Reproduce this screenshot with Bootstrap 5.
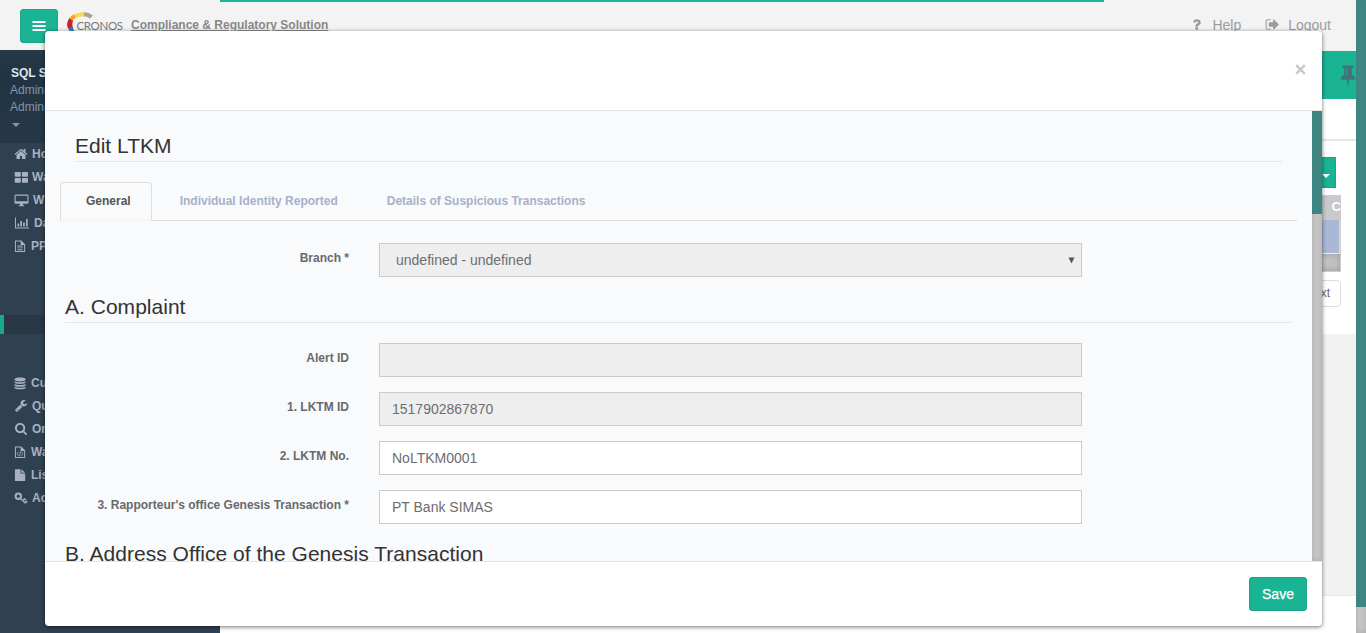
<!DOCTYPE html>
<html lang="en">
<head>
<meta charset="utf-8">
<meta name="viewport" content="width=device-width, initial-scale=1">
<title>Edit LTKM</title>
<link rel="stylesheet" href="https://cdn.jsdelivr.net/npm/bootstrap@5.3.0/dist/css/bootstrap.min.css">
<style>
body{font-family:"Liberation Sans",Arial,sans-serif;font-size:13px;line-height:1.42857;color:#676a6c;background:#fff;height:633px;overflow:hidden}
svg{display:block;fill:currentColor;flex:none}
.topbar{height:50px;background:#f3f3f3;color:#999c9e}
.teal-btn{background:#1ab394;border:1px solid #18a689;color:#fff;border-radius:3px}
.menu-toggle{width:38px;height:34px;margin:9px 0 0 20px}
.brand-logo{margin:9px 0 0 8px}
.brand-title{margin:17px 0 0 8px;font-size:12px;line-height:17px;color:#888}
.top-links{margin-top:15px;font-size:14px;line-height:20px;padding-right:25px}
.top-links svg{margin-top:2px}
.side{width:220px;background:#2f4050;color:#a7b1c2;font-weight:700;font-size:12px}
.profile{height:93px;padding:15px 10px 0;background:linear-gradient(#283a49,#223442 30%,#263847);color:#8095a8;font-weight:400}
.profile strong{color:#dfe4ed;line-height:17px;font-size:12px;padding-left:1px}
.profile span{line-height:17px}
.caret{border:4px solid transparent;border-top-color:currentColor;border-bottom:0;width:0;height:0;margin:7px 0 0 2px}
.side-link{height:23px;padding-left:14px;gap:4px}
.side-link svg{margin-top:-2px}
.side-active{height:19px;margin:57px 0 38px;background:#293846;border-left:4px solid #19aa8d}
.page-area{min-width:0;background:#f2f2f2}
.band{height:48px;margin-top:1px;background:#1ab394;color:#42757a}
.panel-head{height:42px;background:#fff;border-bottom:2px solid #e7e7e7}
.panel-main{height:193px;background:#fff;padding:16px 15px 0 0}
.drop-btn{width:28px;height:31px;margin-right:5px;border-radius:0}
.grid-box{width:120px;height:77px;margin-top:7px;border:1px solid #ccc;background:#c8c9cc}
.grid-head{height:24px;line-height:22px;color:#fff;font-weight:700;margin-right:-1px}
.grid-row{height:34px;background:#aab8d5;border-bottom:1px solid #eee;border-right:1px solid #d5dbea}
.grid-scroll{height:17px;background:#c1c1c1;box-shadow:inset 0 0 6px rgba(0,0,0,.2)}
.page-next{height:27px;margin-top:8px;padding:0 10px;border:1px solid #ddd;border-radius:0 4px 4px 0;font-size:12px}
.foot{height:38px;background:#fff;border-top:1px solid #e7eaec}
.scroll-track{width:10px;background:#c8c8c8;box-shadow:inset 0 0 6px rgba(0,0,0,.15)}
.scroll-thumb{background:#438581;box-shadow:inset 0 0 5px rgba(40,140,135,.7)}
.progress-line{position:absolute;left:220px;top:0;width:884px;height:2px;background:#1ab394}
.edit-dialog{position:absolute;left:45px;top:31px;width:1277px;height:595px;border-radius:4px;background:#fff;box-shadow:0 1px 4px rgba(0,0,0,.55);overflow:hidden}
.dlg-head{height:80px;border-bottom:1px solid #e5e5e5;padding:0 16px 2px 0;color:#c9c9c9}
.dlg-body{height:450px;background:#f9fafc}
.dlg-content{overflow:hidden;padding:0 15px}
.dlg-foot{height:65px;border-top:1px solid #e5e5e5;padding:15px 15px 0 0}
.save-btn{width:58px;height:34px;font-size:14px;padding:1px 0 0;-webkit-text-stroke:.25px #fff}
.sec{color:#333;font-size:21px;line-height:25px;font-weight:400;margin:0;border-bottom:1px solid #e4e6e8}
.sec-main{margin:23px 15px 0;height:28px;line-height:24px}
.sec-sub{margin:0 5px;height:29px;letter-spacing:.02px}
.edit-tabs{margin-top:20px;height:39px;border-bottom:1px solid #ddd;font-size:12px;font-weight:700}
.edit-tabs .nav-link{height:39px;padding:9px 20px 0 25px;margin-right:2px;border:1px solid transparent;color:#a7b1c7;border-radius:4px 4px 0 0;line-height:18px}
.edit-tabs .nav-link.active{background:#f9fafc;color:#555;border-color:#ddd #ddd #f3f3f4}
.field{height:34px;margin-bottom:15px}
.field label{width:289px;margin-right:30px;padding-top:7px;text-align:right;font-size:12px;line-height:17px;font-weight:700}
.field .box{width:703px;height:34px;border:1px solid #c9cbcd;background:#fff;padding:2px 12px 0;font-size:14px;color:#6c6e70}
.field .locked{background:#eee}
.select-arrow{margin:0 1px 2px 0}
</style>
</head>
<body>
<svg class="d-none"><defs>
<symbol id="home" viewBox="0 0 1792 1792"><path d="M1472 992v480q0 26-19 45t-45 19h-384v-384h-256v384h-384q-26 0-45-19t-19-45v-480q0-1 .5-3t.5-3l575-474 575 474q1 2 1 6zm223-69l-62 74q-8 9-21 11h-3q-13 0-21-7l-692-577-692 577q-12 8-24 7-13-2-21-11l-62-74q-8-10-7-23.500t11-21.500l719-599q32-26 76-26t76 26l244 204v-195q0-14 9-23t23-9h192q14 0 23 9t9 23v408l219 182q10 8 11 21.500t-7 23.500z"/></symbol>
<symbol id="tiles" viewBox="0 0 14 14"><path d="M1.500 2H6q.8 0 .8.8V6q0 .8-.8.8H1.500Q.7 6.800.7 6V2.800q0-.8.800-.8zM8.700 2h4.500q.8 0 .8.8V6q0 .8-.8.800H8.700q-.8 0-.8-.8V2.800q0-.8.8-.8zM1.500 8H6q.8 0 .8.800V12q0 .8-.8.800H1.500q-.8 0-.8-.8V8.800q0-.8.800-.8zm7.200 0h4.500q.8 0 .8.800V12q0 .8-.8.800H8.700q-.8 0-.8-.8V8.800q0-.8.8-.8z"/></symbol>
<symbol id="screen" viewBox="0 0 14 14"><path fill-rule="evenodd" d="M1.200 1.500h11.600q1.200 0 1.200 1.200v7q0 1.100-1.200 1.100H8.500v1.400h1.200v1H4.300v-1h1.200v-1.400H1.200Q0 10.800 0 9.700v-7Q0 1.500 1.200 1.500zM1.100 2.700v5.600h11.800V2.700z"/></symbol>
<symbol id="chart" viewBox="0 0 14 14"><path d="M0 1.500h1v10h13v1H0zM2.500 7.500h1.700v3H2.500zm2.800-2.500H7v5.500H5.300zm2.800 1.500h1.700v4H8.100zM11 3h1.700v7.500H11z"/></symbol>
<symbol id="doc" viewBox="0 0 14 14"><path fill-rule="evenodd" d="M1 1h6.800L12 5V13.500H1zM2.100 2.100v10.300h8.800V5.900H7.100V2.100zM3.500 6.500h6v1h-6zm0 2h6v1h-6zm0 2h6v1h-6z"/></symbol>
<symbol id="data" viewBox="0 0 14 14"><path d="M.5 3.200C.5.400 12.500.4 12.500 3.200S.5 6 .5 3.200zM.5 5c2 1.600 10 1.600 12 0v1.300c0 2.300-12 2.300-12 0zm0 3c2 1.600 10 1.600 12 0v1.300c0 2.300-12 2.300-12 0zm0 3c2 1.600 10 1.600 12 0v1c0 2.300-12 2.300-12 0z"/></symbol>
<symbol id="wrench" viewBox="0 0 1792 1792"><path d="M448 1472q0-26-19-45t-45-19-45 19-19 45 19 45 45 19 45-19 19-45zm644-420l-682 682q-37 37-90 37-52 0-91-37l-106-108q-38-36-38-90 0-53 38-91l681-681q39 98 114.500 173.500t173.500 114.500zm634-435q0 39-23 106-47 134-164.500 217.500t-258.500 83.500q-185 0-316.500-131.500t-131.500-316.500 131.500-316.500 316.500-131.500q58 0 121.500 16.500t107.500 46.500q16 11 16 28t-16 28l-293 169v224l193 107q5-3 79-48.500t135.500-81 70.500-35.500q15 0 23.500 10t8.500 25z"/></symbol>
<symbol id="search" viewBox="0 0 1792 1792"><path d="M1216 832q0-185-131.500-316.500t-316.500-131.500-316.500 131.500-131.500 316.500 131.500 316.500 316.500 131.500 316.500-131.500 131.500-316.500zm512 832q0 52-38 90t-90 38q-54 0-90-38l-343-342q-179 124-399 124-143 0-273.500-55.500t-225-150-150-225-55.500-273.500 55.500-273.500 150-225 225-150 273.500-55.500 273.500 55.500 225 150 150 225 55.500 273.500q0 220-124 399l343 343q37 37 37 90z"/></symbol>
<symbol id="code" viewBox="0 0 14 14"><path fill-rule="evenodd" d="M1 1h6.800L12 5V13.500H1zM2.100 2.100v10.300h8.800V5.900H7.100V2.100z"/><path d="M4.800 6.800 3.400 8.900l1.400 2.100M8.100 6.800l1.400 2.100-1.400 2.100M7 6.200l-1 5.500" fill="none" stroke="currentColor" stroke-width=".9"/></symbol>
<symbol id="file" viewBox="0 0 14 14"><path d="M1 1.500q0-.7.700-.7H7V5.500h5v7.300q0 .7-.7.700H1.700q-.7 0-.7-.7zM7.900.8l4.100 3.900H7.900z"/></symbol>
<symbol id="key" viewBox="0 0 14 14"><g fill="none" stroke="currentColor"><circle cx="4.300" cy="5.300" r="2.700" stroke-width="2"/><path d="m6.300 7.300 5.400 5.200M8.800 9.500l1.800-1.600 1.300 1.200M10.700 11.600l1.400-1.300 1.200 1.200" stroke-width="1.300"/></g></symbol>
<symbol id="help" viewBox="0 0 1792 1792"><path d="M1088 1256v240q0 16-12 28t-28 12h-240q-16 0-28-12t-12-28v-240q0-16 12-28t28-12h240q16 0 28 12t12 28zm316-600q0 54-15.500 101t-35 76.500-55 59.500-57.500 43.500-61 35.500q-41 23-68.500 65t-27.500 67q0 17-12 32.500t-28 15.500h-240q-15 0-25.500-18.500t-10.500-37.500v-45q0-83 65-156.500t143-108.500q59-27 84-56t25-76q0-42-46.500-74t-107.500-32q-65 0-108 29-35 25-107 115-13 16-31 16-12 0-25-8l-164-125q-13-10-15.500-25t5.500-28q160-266 464-266 80 0 161 31t146 83 106 127.500 41 158.500z"/></symbol>
<symbol id="exit" viewBox="0 0 1792 1792"><path d="M704 1440q0 4 1 20t.5 26.500-3 23.500-10 19.500-20.500 6.500h-320q-119 0-203.500-84.500t-84.500-203.500v-704q0-119 84.500-203.500t203.500-84.500h320q13 0 22.500 9.500t9.500 22.500q0 4 1 20t.5 26.500-3 23.500-10 19.500-20.500 6.500h-320q-66 0-113 47t-47 113v704q0 66 47 113t113 47h312l11.500 1 11.500 3 8 5.500 7 9 2 13.500zm928-544q0 26-19 45l-544 544q-19 19-45 19t-45-19-19-45v-288h-448q-26 0-45-19t-19-45v-384q0-26 19-45t45-19h448v-288q0-26 19-45t45-19 45 19l544 544q19 19 19 45z"/></symbol>
<symbol id="pin" viewBox="0 0 1792 1792"><path d="M800 864v-448q0-14-9-23t-23-9-23 9-9 23v448q0 14 9 23t23 9 23-9 9-23zm672 352q0 26-19 45t-45 19h-429l-51 483q-2 12-10.500 20.500t-20.500 8.500h-1q-27 0-32-27l-76-485h-404q-26 0-45-19t-19-45q0-123 78.500-221.500t177.500-98.500v-512q-52 0-90-38t-38-90 38-90 90-38h640q52 0 90 38t38 90-38 90-90 38v512q99 0 177.500 98.500t78.500 221.500z"/></symbol>
</defs></svg>

<div class="d-flex vh-100">
  <div class="flex-grow-1 d-flex flex-column overflow-hidden">
    <header class="topbar d-flex flex-shrink-0">
      <button class="teal-btn menu-toggle d-flex align-items-center justify-content-center p-0" aria-label="Menu"><svg width="14" height="12" viewBox="0 0 14 12"><path d="M.5 1h13v2H.5zm0 4h13v2H.5zm0 4h13v2H.5z"/></svg></button>
      <svg class="brand-logo" width="58" height="32" viewBox="0 0 58 32">
        <path d="M17 3.200q5.500-.4 10 3.300l-3 3q-3.200-2.400-7-2.300z" fill="#aaa58c"/>
        <path d="M7 6q4.500-3.200 11-2.800v4.200Q12 7 8.500 10z" fill="#f4dc4a"/>
        <path d="M3 9.500q2-2.800 5-4.200l1.500 3.500Q7 10.500 6 13z" fill="#f3a12c"/>
        <path d="M1.300 13.500Q2 11 3.300 9.200L7 12q-1.500 4 .5 8.500L4 22Q.3 18 1.300 13.500z" fill="#cf202e"/>
        <path d="M2.500 19.500 6.500 18q.5 3 3 5H5q-1.500-1.500-2.500-3.500z" fill="#2784b8"/>
        <text x="10.500" y="20.500" font-family="Lato,sans-serif" font-size="11.500" fill="#77787a" textLength="46.500">CRONOS</text>
      </svg>
      <strong class="brand-title text-decoration-underline" style="margin-left:7px">Compliance &amp; Regulatory Solution</strong>
      <div class="top-links d-flex ms-auto">
        <svg width="15" height="15"><use href="#help"/></svg><span class="ms-2 me-4">Help</span>
        <svg class="me-1" width="15" height="15"><use href="#exit"/></svg><span class="ms-1">Logout</span>
      </div>
    </header>
    <div class="d-flex flex-grow-1">
      <nav class="side flex-shrink-0">
        <div class="profile d-flex flex-column"><strong>SQL S</strong><span>Admini</span><span>Admini</span><i class="caret"></i></div>
        <div class="side-link d-flex align-items-center"><svg width="14" height="14"><use href="#home"/></svg><span>Ho</span></div>
        <div class="side-link d-flex align-items-center"><svg width="14" height="14"><use href="#tiles"/></svg><span>Wa</span></div>
        <div class="side-link d-flex align-items-center"><svg width="15" height="14"><use href="#screen"/></svg><span>W</span></div>
        <div class="side-link d-flex align-items-center"><svg width="16" height="14"><use href="#chart"/></svg><span>Da</span></div>
        <div class="side-link d-flex align-items-center"><svg width="13" height="14"><use href="#doc"/></svg><span>PP</span></div>
        <div class="side-active"></div>
        <div class="side-link d-flex align-items-center"><svg width="13" height="14"><use href="#data"/></svg><span>Cu</span></div>
        <div class="side-link d-flex align-items-center"><svg width="14" height="13"><use href="#wrench"/></svg><span>Qu</span></div>
        <div class="side-link d-flex align-items-center"><svg width="14" height="13"><use href="#search"/></svg><span>Or</span></div>
        <div class="side-link d-flex align-items-center"><svg width="13" height="14"><use href="#code"/></svg><span>Wa</span></div>
        <div class="side-link d-flex align-items-center"><svg width="13" height="14"><use href="#file"/></svg><span>Lis</span></div>
        <div class="side-link d-flex align-items-center"><svg width="14" height="14"><use href="#key"/></svg><span>Ac</span></div>
      </nav>
      <main class="page-area flex-grow-1 d-flex flex-column">
        <div class="band d-flex align-items-center justify-content-end"><svg width="22" height="22" viewBox="0 0 22 22"><use href="#pin" width="24" height="22" x="2"/></svg></div>
        <div class="panel-head"></div>
        <div class="panel-main d-flex flex-column align-items-end">
          <button class="teal-btn drop-btn d-flex justify-content-center p-0" aria-label="More"><i class="caret mt-3 ms-2"></i></button>
          <div class="grid-box"><div class="grid-head text-end">C</div><div class="grid-row"></div><div class="grid-scroll"></div></div>
          <div class="page-next d-flex align-items-center">Next</div>
        </div>
        <div class="foot mt-auto"></div>
      </main>
    </div>
  </div>
  <div class="scroll-track flex-shrink-0"><div class="scroll-thumb" style="height:607px"></div></div>
</div>
<div class="progress-line"></div>

<section class="edit-dialog" role="dialog">
  <div class="dlg-head d-flex align-items-center justify-content-end"><svg width="11" height="11" viewBox="0 0 11 11"><path d="m1.200 1.200 8.600 8.600m0-8.600L1.200 9.800" stroke="currentColor" stroke-width="2.400"/></svg></div>
  <div class="dlg-body d-flex">
    <div class="dlg-content flex-grow-1">
      <h2 class="sec sec-main">Edit LTKM</h2>
      <ul class="nav edit-tabs">
        <li><a class="nav-link active">General</a></li>
        <li><a class="nav-link">Individual Identity Reported</a></li>
        <li><a class="nav-link">Details of Suspicious Transactions</a></li>
      </ul>
      <div class="field d-flex" style="margin-top:22px;margin-bottom:17px"><label>Branch *</label><div class="box locked d-flex align-items-center justify-content-between pe-1 ps-3">undefined - undefined<svg class="select-arrow" width="9" height="7" viewBox="0 0 9 7"><path d="M1.500.5h6L4.500 6.500z" fill="#555"/></svg></div></div>
      <h3 class="sec sec-sub">A. Complaint</h3>
      <div class="field d-flex" style="margin-top:20px"><label>Alert ID</label><div class="box locked"></div></div>
      <div class="field d-flex"><label>1. LKTM ID</label><div class="box locked d-flex align-items-center">1517902867870</div></div>
      <div class="field d-flex"><label>2. LKTM No.</label><div class="box d-flex align-items-center">NoLTKM0001</div></div>
      <div class="field d-flex" style="margin-bottom:17px"><label>3. Rapporteur's office Genesis Transaction *</label><div class="box d-flex align-items-center">PT Bank SIMAS</div></div>
      <h3 class="sec sec-sub">B. Address Office of the Genesis Transaction</h3>
    </div>
    <div class="scroll-track"><div class="scroll-thumb" style="height:103px"></div></div>
  </div>
  <div class="dlg-foot d-flex justify-content-end"><button class="teal-btn save-btn">Save</button></div>
</section>
<script src="https://cdn.jsdelivr.net/npm/bootstrap@5.3.0/dist/js/bootstrap.bundle.min.js"></script>
</body>
</html>
